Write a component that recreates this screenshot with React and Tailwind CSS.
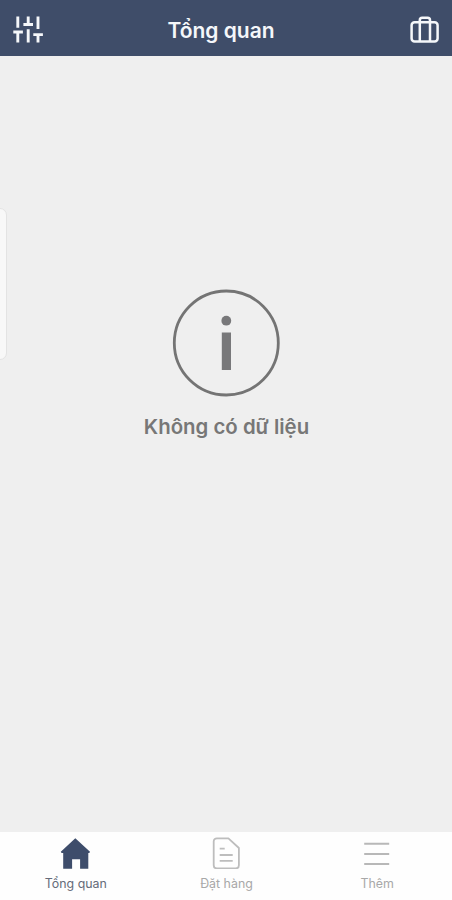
const SlidersIcon = () => (
  <svg className="h-[30px] w-8" viewBox="0 0 32 30" fill="none" stroke="currentColor" strokeWidth="2.9">
    <path d="M5.8 1.5v11.2M1.3 17h9.6M5.8 17v10.5M16.2 1.5v8M11.4 9.5h9.6M16.2 14.3v13.2M26 1.5v12.4M21.3 19.6h9.6M26 19.6v7.9" />
  </svg>
);

const SuitcaseIcon = () => (
  <svg className="h-[30px] w-8" viewBox="0 0 32 30" fill="none" stroke="currentColor" strokeWidth="2.5" strokeLinejoin="round">
    <rect x="3.6" y="7.3" width="26" height="19.2" rx="3" />
    <path d="M11.8 26.5V5.2a2.4 2.4 0 0 1 2.4-2.4h5.4A2.4 2.4 0 0 1 22 5.2v21.3" />
  </svg>
);

const InfoIcon = () => (
  <svg className="h-[108px] w-[108px]" viewBox="0 0 108 108">
    <circle cx="54.3" cy="54" r="52" fill="none" stroke="#747474" strokeWidth="2.8" />
    <circle cx="54.3" cy="31.7" r="4.9" fill="#78787a" />
    <path d="M49.8 43.5h9.2V81h-9.2z" fill="#78787a" />
  </svg>
);

const HomeIcon = () => (
  <svg className="h-8 w-8" viewBox="0 0 32 32" fill="#3e4d6b">
    <path d="M16.3 1.2 31 14.8 30.3 16H29.3v15.7h-8.2V22.2h-8v9.5H4.2V16h-1.6L1.8 14.8Z" />
  </svg>
);

const DocumentIcon = () => (
  <svg className="h-8 w-8" viewBox="0 0 32 32" fill="none" stroke="#bdbdbd" strokeWidth="1.8" strokeLinejoin="round">
    <path d="M6.9 1.3h11.5L28.9 11v17.2a3.2 3.2 0 0 1-3.2 3.2H6.9a3.2 3.2 0 0 1-3.2-3.2V4.5A3.2 3.2 0 0 1 6.9 1.3Z" />
    <path d="M9.7 11.7h5M9.7 18h13M9.7 23.8h13" />
  </svg>
);

const MenuIcon = () => (
  <svg className="h-8 w-8" viewBox="0 0 32 32" stroke="#b8b8b8" strokeWidth="1.9">
    <path d="M3.2 6.7h25M3.2 17h25M3.2 27h25" />
  </svg>
);

const tabs = [
  { label: "Tổng quan", Icon: HomeIcon, color: "text-[#656b79]" },
  { label: "Đặt hàng", Icon: DocumentIcon, color: "text-[#a8a8a8]" },
  { label: "Thêm", Icon: MenuIcon, color: "text-[#a8a8a8]" },
];

export default function App() {
  return (
    <div className="flex h-[900px] w-full flex-col overflow-hidden bg-[#efefef] font-['Inter',sans-serif]">
      <header className="flex h-14 shrink-0 items-center justify-between bg-[#3f4d69] px-3 pt-1 text-[#f5f7fa]">
        <SlidersIcon />
        <h1 className="mt-0.5 mr-[10px] text-[21px] leading-7 font-semibold whitespace-nowrap">Tổng quan</h1>
        <SuitcaseIcon />
      </header>
      <main className="relative flex flex-1 flex-col items-center pt-[233px]">
        <div className="absolute top-[152px] -left-3 h-[152px] w-[19px] rounded-[7px] border border-[#e3e3e3] bg-[#f8f8f8]" />
        <InfoIcon />
        <p className="mt-4 pl-px text-[20.4px] leading-7 font-semibold text-[#777777]">Không có dữ liệu</p>
      </main>
      <nav className="grid h-[68px] shrink-0 grid-cols-3 bg-[#fefefe]">
        {tabs.map(({ label, Icon, color }) => (
          <div key={label} className={"flex flex-col items-center pt-[5px] " + color}>
            <Icon />
            <span className="mt-[7px] pl-px text-[12.4px] leading-4">{label}</span>
          </div>
        ))}
      </nav>
    </div>
  );
}
